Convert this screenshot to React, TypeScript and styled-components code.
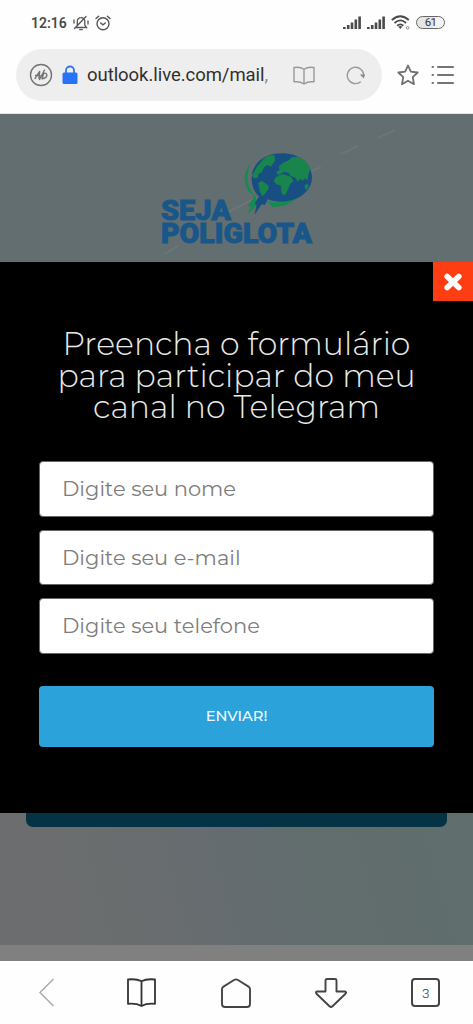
import React from 'react';
import styled, { createGlobalStyle } from 'styled-components';

const Global = createGlobalStyle`
  * { box-sizing: border-box; }
  body { margin: 0; background: #fff; }
  button, input { font: inherit; border: 0; padding: 0; }
`;

const Screen = styled.div`
  width: 473px;
  height: 1024px;
  display: flex;
  flex-direction: column;
  overflow: hidden;
  background: #fefefe;
  font-family: Roboto, sans-serif;
`;

const StatusBar = styled.div`
  height: 49px;
  padding: 0 28px 4px 31px;
  display: flex;
  align-items: center;
  justify-content: space-between;
`;

const StatusGroup = styled.div<{ $gap: number }>`
  display: flex;
  align-items: center;
  gap: ${(p) => p.$gap}px;
`;

const Clock = styled.span`
  font-size: 14px;
  font-weight: 600;
  color: #4a4a4a;
  width: 36px;
  white-space: nowrap;
`;

const Battery = styled.span`
  width: 29px;
  height: 13px;
  border: 1.4px solid #666;
  border-radius: 7px;
  display: flex;
  align-items: center;
  justify-content: center;
  font-size: 11.5px;
  line-height: 11px;
  letter-spacing: -0.8px;
  font-weight: 400;
  color: #333;
  background: linear-gradient(90deg, #e6e6e6 60%, #f4f4f4 60%);
`;

const AddressRow = styled.div`
  height: 65px;
  padding-left: 16px;
  display: flex;
  align-items: flex-start;
  border-bottom: 1px solid #e4e4e4;
`;

const AddressPill = styled.div`
  width: 366px;
  height: 52px;
  border-radius: 26px;
  background: #eeeeee;
  display: flex;
  align-items: center;
  padding-left: 13px;
`;

const Url = styled.span`
  margin-left: 9px;
  width: 206px;
  font-size: 18.5px;
  letter-spacing: -0.05px;
  color: #303030;
  white-space: nowrap;
`;

const FadedEnd = styled.span`
  color: #888;
`;

const AddressActions = styled.div`
  display: flex;
  align-items: center;
  height: 52px;
  gap: 12px;
  padding-left: 15px;
`;

const Page = styled.main`
  height: 847px;
  display: flex;
  flex-direction: column;
  background: #636e70;
`;

const Hero = styled.header`
  height: 148px;
`;

const Modal = styled.section`
  height: 551px;
  background: #000;
  display: flex;
  flex-direction: column;
`;

const CloseButton = styled.button`
  width: 40px;
  height: 39px;
  align-self: flex-end;
  display: flex;
  align-items: center;
  justify-content: center;
  background: #ff3d12;
`;

const Title = styled.h1`
  margin: 28px 0 0;
  height: 132px;
  display: flex;
  flex-direction: column;
  align-items: center;
  font-family: Montserrat, Inter, sans-serif;
  font-size: 31.5px;
  font-weight: 300;
  line-height: 31.5px;
  color: #e9e9e9;
`;

const TitleLine = styled.span`
  white-space: nowrap;
`;

const Form = styled.form`
  padding: 0 39px;
  display: flex;
  flex-direction: column;
  gap: 13px;
`;

const Field = styled.input`
  height: 55.5px;
  border: 1px solid #666;
  border-radius: 4px;
  background: #fff;
  padding: 0 22px;
  font-family: Montserrat, Inter, sans-serif;
  font-size: 21px;
  &::placeholder { color: #7d7d7d; opacity: 1; }
`;

const Submit = styled.button`
  height: 61px;
  margin-top: 19px;
  border-radius: 4px;
  background: #2ba2da;
  color: #f4fbff;
  font-family: Montserrat, Inter, sans-serif;
  font-size: 14.7px;
  font-weight: 500;
`;

const Below = styled.div`
  height: 132px;
  padding: 0 26px;
  background: linear-gradient(75deg, #6d6d6e 0%, #6a6d6e 25%, #656c70 50%, #626d6e 65%, #606e6d 100%);
`;

const CallToActionEdge = styled.div`
  height: 14px;
  border-radius: 0 0 7px 7px;
  background: #053346;
`;

const NextSection = styled.div`
  height: 16px;
  background: #808080;
`;

const BottomNav = styled.nav`
  height: 63px;
  display: grid;
  grid-template-columns: repeat(5, 94.6px);
  justify-items: center;
  align-items: center;
  background: #fefefe;
`;

const TabCount = styled.span`
  width: 29px;
  height: 29px;
  border: 2px solid #444;
  border-radius: 4px;
  display: flex;
  align-items: center;
  justify-content: center;
  font-size: 13.5px;
  font-weight: 300;
  color: #333;
`;

const MutedBell = () => (
  <svg width="16" height="16" viewBox="0 0 16 16" fill="none" stroke="#555" strokeWidth="1.3" strokeLinecap="round">
    <path d="M3 12.500h10.500l-1.700-2.500V6.500A3.700 3.700 0 0 0 8 2.600 3.700 3.700 0 0 0 4.300 6.500V10zM6.700 14.600h2.600M1.500 13.500 13 1.500M1 5v3M15 6v3" />
  </svg>
);

const Alarm = () => (
  <svg width="16" height="16" viewBox="0 0 16 16" fill="none" stroke="#555" strokeWidth="1.400" strokeLinecap="round">
    <circle cx="8" cy="8.800" r="6" />
    <path d="M5.700 8l2.300 1.800L10.300 8M1 3.600 3.600 1.200M15 3.600 12.400 1.200" />
  </svg>
);

const Signal = () => (
  <svg width="18" height="14" viewBox="0 0 18 14" fill="#4a4a4a">
    <rect x="0" y="11" width="2.600" height="2" />
    <rect x="3.900" y="9" width="2.600" height="4" />
    <rect x="7.700" y="6.500" width="2.600" height="6.500" />
    <rect x="11.500" y="3.500" width="2.600" height="9.500" />
    <rect x="15.300" y="0.500" width="2.600" height="12.500" />
  </svg>
);

const Wifi = () => (
  <svg width="19" height="15" viewBox="0 0 19 15" fill="none" stroke="#4a4a4a" strokeWidth="1.800">
    <path d="M.8 5.200Q9.300-2.600 17.800 5.200M3.500 8Q9.300 2.800 15.100 8M6.200 10.700Q9.300 8 12.400 10.700" />
    <path d="M7.300 11.800Q9.300 10.300 11.300 11.800L9.300 14z" fill="#4a4a4a" stroke="none" />
    <circle cx="16.600" cy="12.800" r="1.300" strokeWidth="1" stroke="#888" />
  </svg>
);

const AdBadge = () => (
  <svg width="24" height="24" viewBox="0 0 24 24" fill="none" stroke="#747474" strokeWidth="1.400" strokeLinecap="round" strokeLinejoin="round">
    <circle cx="12" cy="12" r="10.500" />
    <path d="M6 15.500 10.700 8.500 10 15.500M6.500 12.500l4.500 .3M10.500 16.500 15.500 7M14 10.500c4.600-2 6 4.500-1 5.300L14.500 11" />
  </svg>
);

const Lock = () => (
  <svg width="16" height="20" viewBox="0 0 16 20">
    <path d="M4 9V5.500a4 4 0 0 1 8 0V9" fill="none" stroke="#2f75f5" strokeWidth="1.800" />
    <rect x="0.500" y="7.500" width="15" height="11.500" rx="1.500" fill="#2673f7" />
  </svg>
);

const Book = ({ w, h, color, sw }: { w: number; h: number; color: string; sw: number }) => (
  <svg width={w} height={h} viewBox={`0 0 ${w} ${h}`} fill="none" stroke={color} strokeWidth={sw} strokeLinejoin="round">
    <path
      d={`M1 1.500Q${w * 0.33} .6 ${w / 2} 3.200Q${w * 0.67} .6 ${w - 1} 1.500V${h - 3.2}Q${w * 0.67} ${h - 3.8} ${w / 2} ${h - 1}Q${w * 0.33} ${h - 3.8} 1 ${h - 3.2}ZM${w / 2} 3.200V${h - 1}`}
    />
  </svg>
);

const Reload = () => (
  <svg width="20" height="20" viewBox="0 0 20 20" fill="none" stroke="#999" strokeWidth="1.400">
    <path d="M14.800 16.700A8.200 8.200 0 1 1 17.700 10.800" />
    <path d="M13.800 9.400h5.200l-1.200 4z" fill="#888" stroke="none" />
  </svg>
);

const Star = () => (
  <svg width="22" height="22" viewBox="0 0 22 22" fill="none" stroke="#707070" strokeWidth="1.800" strokeLinejoin="round">
    <path d="M11 1.500 13.800 7.700 20.700 8.500 15.700 13.200 17 20.200 11 16.700 5 20.200 6.300 13.200 1.300 8.500 8.200 7.700Z" />
  </svg>
);

const Menu = () => (
  <svg width="23" height="20" viewBox="0 0 23 20" stroke="#747474" strokeWidth="2" strokeLinecap="round">
    <path d="M7 2h15M7 10h15M7 18h15M1.500 2h.5M1.500 10h.5M1.500 18h.5" />
  </svg>
);

const Logo = () => (
  <svg width="473" height="148" viewBox="0 114 473 148">
    <g stroke="#768083" strokeWidth="1.600" opacity=".5">
      <path d="M378 138 395 130M341 154 358 146M308 173 321 167M164 254 178 246M226 213 258 197" />
    </g>
    <g transform="translate(215 145) scale(.3333)">
      <path d="M108 55Q82 85 92 120Q97 138 114 150L116 160 98 182 107 184 98 208 126 180 124 158Q92 125 98 88Q100 70 108 55Z" fill="#128c4f" />
      <path d="M158 170Q200 178 245 160Q220 186 172 186Z" fill="#128c4f" />
      <path d="M200 25C255 25 291 57 291 97C291 140 248 170 200 170C183 170 168 167 158 163L150 180 140 178 118 210 125 180 119 176 132 154C116 139 109 120 110 96C112 55 148 25 200 25Z" fill="#184f83" />
      <path d="M111 92 125 66 145 42 160 32 178 30 180 48 167 65 157 60 148 67 140 82 130 88 128 98 117 100ZM130 114 140 108 150 114 161 122 160 131 150 146 142 154 134 138Z" fill="#19854c" />
      <path d="M181 98 192 91 205 88 228 95 235 108 224 120 214 145 205 152 199 140 197 121 184 118 176 108ZM184 81 193 75 192 63 207 52 222 46 230 37 250 36 273 49 287 72 280 88 278 106 270 100 264 107 255 101 249 110 241 98 226 92 221 84 208 80 198 87 187 89Z" fill="#19854c" />
      <path d="M268 122 279 115 280 129 272 136Z" fill="#19854c" />
    </g>
    <g fill="#195689" stroke="#195689" strokeWidth=".9" fontFamily="Roboto, sans-serif" fontWeight="900" fontSize="28.500">
      <text x="161" y="220.300" textLength="70" lengthAdjust="spacingAndGlyphs">SEJA</text>
      <text x="161" y="242.800" textLength="151" lengthAdjust="spacingAndGlyphs">POLIGLOTA</text>
    </g>
  </svg>
);

const Cross = () => (
  <svg width="20" height="20" viewBox="0 0 20 20" stroke="#fff" strokeWidth="5.600" strokeLinecap="round">
    <path d="M4.200 4.500 15.800 15.500M15.800 4.500 4.200 15.500" />
  </svg>
);

const Back = () => (
  <svg width="16" height="29" viewBox="0 0 16 29" fill="none" stroke="#aaa" strokeWidth="1.500">
    <path d="M14.500 1 1 14.500 14.500 28" />
  </svg>
);

const Home = () => (
  <svg width="30" height="30" viewBox="0 0 30 30" fill="none" stroke="#444" strokeWidth="1.900" strokeLinejoin="round">
    <path d="M1 11Q1 9.500 2.500 8.600L13 2Q15 .8 17 2L27.500 8.600Q29 9.500 29 11V26Q29 29 26 29H4Q1 29 1 26Z" />
  </svg>
);

const Download = () => (
  <svg width="32" height="30" viewBox="0 0 32 30" fill="none" stroke="#444" strokeWidth="1.900" strokeLinejoin="round">
    <path d="M10.500 13.500V2.500Q10.500 1 12 1H20Q21.500 1 21.500 2.500V13.500H29.500Q32 13.500 30.500 15.800L17.500 28.200Q16 29.600 14.500 28.200L1.500 15.800Q0 13.500 2.500 13.500Z" />
  </svg>
);

const Slot = styled.span<{ $left: number }>`
  display: flex;
  margin-left: ${(p) => p.$left}px;
`;

export default function App() {
  return (
    <Screen>
      <Global />
      <StatusBar>
        <StatusGroup $gap={6}>
          <Clock>12:16</Clock>
          <MutedBell />
          <Alarm />
        </StatusGroup>
        <StatusGroup $gap={6}>
          <Signal />
          <Signal />
          <Wifi />
          <Battery>61</Battery>
        </StatusGroup>
      </StatusBar>
      <AddressRow>
        <AddressPill>
          <AdBadge />
          <Slot $left={9}><Lock /></Slot>
          <Url>outlook.live.com/mail<FadedEnd>,</FadedEnd></Url>
          <Book w={22} h={19} color="#999" sw={1.4} />
          <Slot $left={31}><Reload /></Slot>
        </AddressPill>
        <AddressActions>
          <Star />
          <Menu />
        </AddressActions>
      </AddressRow>
      <Page>
        <Hero><Logo /></Hero>
        <Modal>
          <CloseButton type="button" aria-label="Fechar"><Cross /></CloseButton>
          <Title>
            <TitleLine>Preencha o formulário</TitleLine>
            <TitleLine>para participar do meu</TitleLine>
            <TitleLine>canal no Telegram</TitleLine>
          </Title>
          <Form>
            <Field placeholder="Digite seu nome" />
            <Field placeholder="Digite seu e-mail" />
            <Field placeholder="Digite seu telefone" />
            <Submit type="button">ENVIAR!</Submit>
          </Form>
        </Modal>
        <Below><CallToActionEdge /></Below>
        <NextSection />
      </Page>
      <BottomNav>
        <Back />
        <Book w={29} h={29} color="#333" sw={1.8} />
        <Home />
        <Download />
        <TabCount>3</TabCount>
      </BottomNav>
    </Screen>
  );
}
